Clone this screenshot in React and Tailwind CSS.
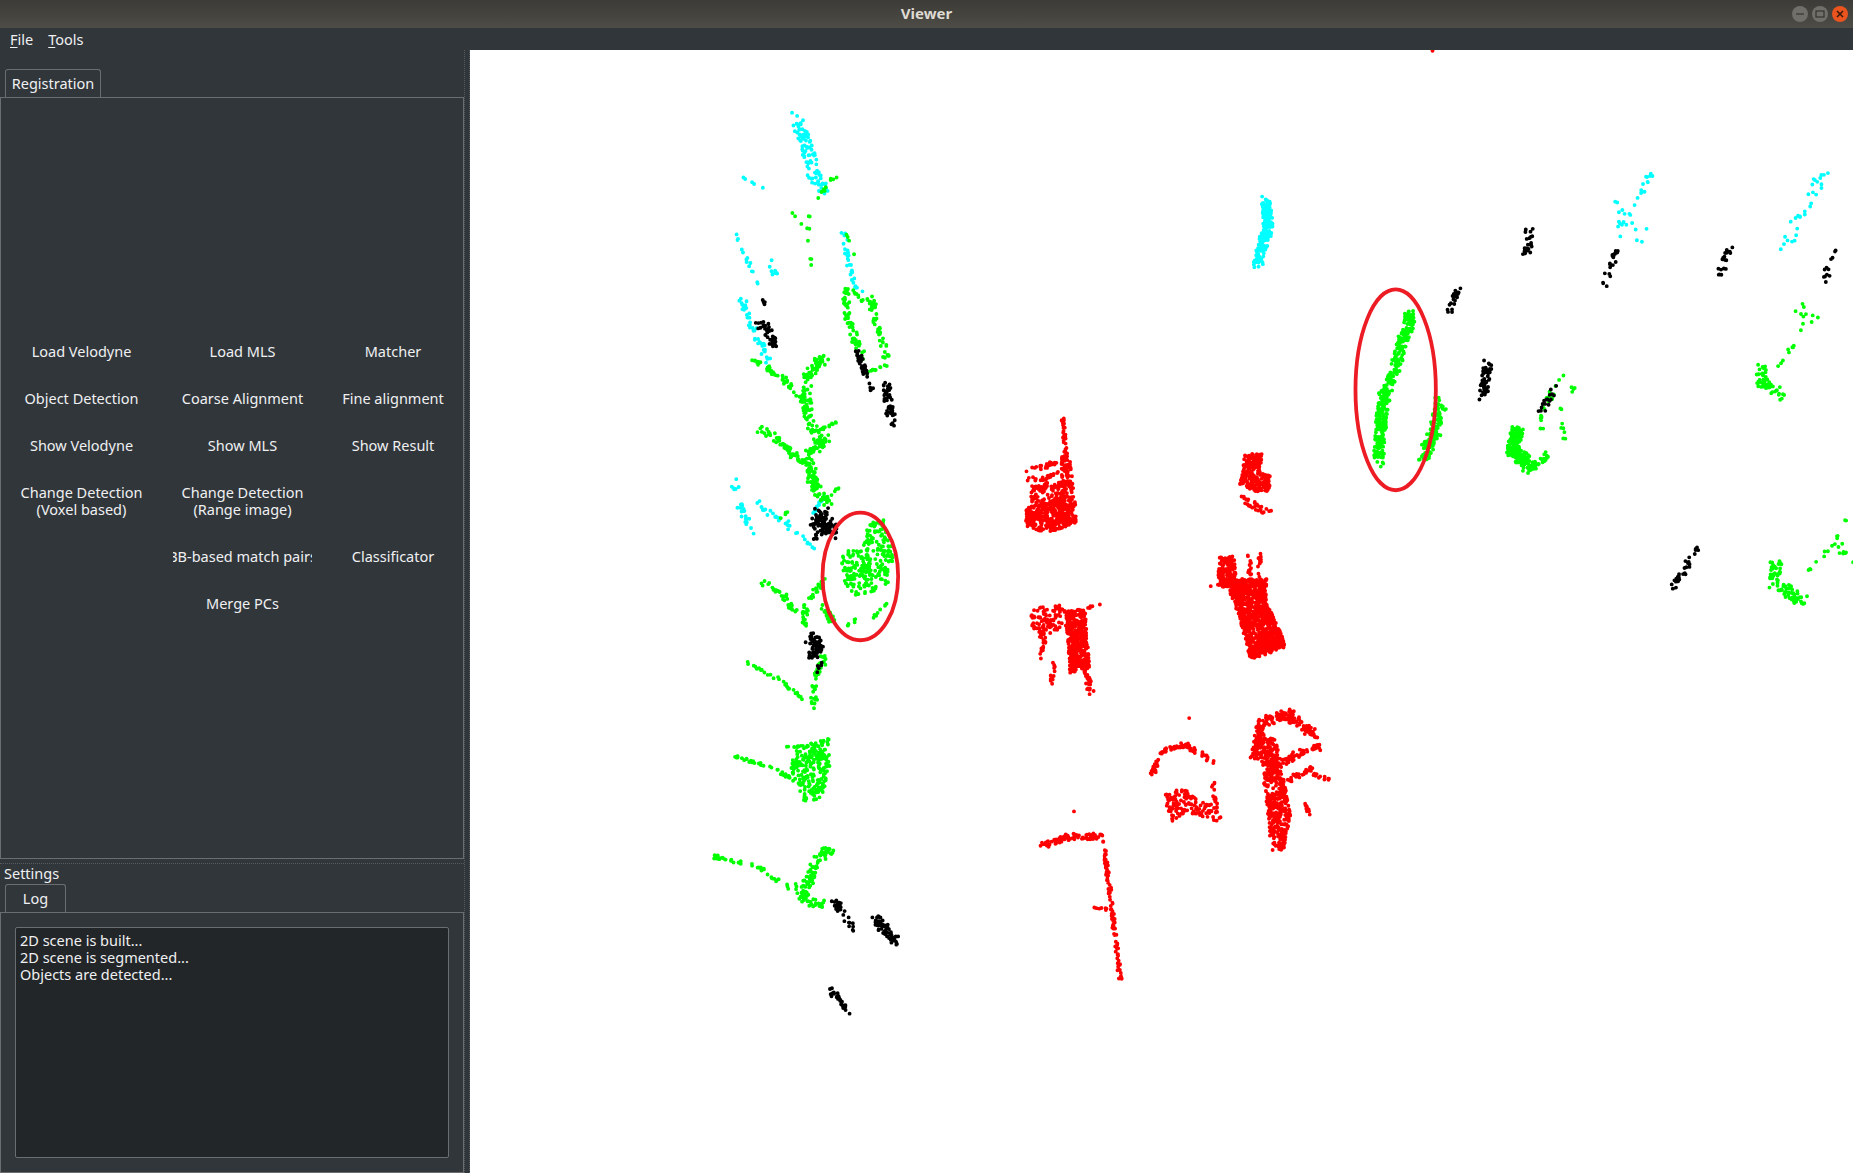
import React from "react";

// tiny seeded generator so the cloud looks the same on every load
const makeRand = (seed) => () => {
  seed = (seed * 16807) % 2147483647;
  return seed / 2147483647;
};

// scatter n points along a polyline, w = spread either side
const along = (pts, w, n, rand) => {
  const segs = [];
  let total = 0;
  for (let i = 0; i + 3 < pts.length; i += 2) {
    const len = Math.hypot(pts[i + 2] - pts[i], pts[i + 3] - pts[i + 1]);
    segs.push([pts[i], pts[i + 1], pts[i + 2], pts[i + 3], len]);
    total += len;
  }
  let d = "";
  for (let k = 0; k < n; k++) {
    let t = rand() * total;
    let s = segs[0];
    for (const seg of segs) {
      s = seg;
      if (t <= seg[4]) break;
      t -= seg[4];
    }
    const f = s[4] ? t / s[4] : 0;
    const x = s[0] + (s[2] - s[0]) * f + (rand() - 0.5) * 2 * w;
    const y = s[1] + (s[3] - s[1]) * f + (rand() - 0.5) * 2 * w;
    d += `M${x.toFixed(1)} ${y.toFixed(1)}h0`;
  }
  return d;
};

const isInside = (x, y, p) => {
  let hit = false;
  for (let i = 0, j = p.length - 2; i < p.length; j = i, i += 2) {
    if (p[i + 1] > y !== p[j + 1] > y && x < ((p[j] - p[i]) * (y - p[i + 1])) / (p[j + 1] - p[i + 1]) + p[i]) hit = !hit;
  }
  return hit;
};

// fill a polygon with n points, for the dense parts of the objects
const inside = (p, n, rand) => {
  const xs = p.filter((_, i) => i % 2 === 0);
  const ys = p.filter((_, i) => i % 2 === 1);
  const x0 = Math.min(...xs), x1 = Math.max(...xs);
  const y0 = Math.min(...ys), y1 = Math.max(...ys);
  let d = "";
  let made = 0;
  while (made < n) {
    const x = x0 + rand() * (x1 - x0);
    const y = y0 + rand() * (y1 - y0);
    if (isInside(x, y, p)) {
      d += `M${x.toFixed(1)} ${y.toFixed(1)}h0`;
      made++;
    }
  }
  return d;
};

const CYAN = [
  [5, 90, [675, 100, 682, 122, 688, 145, 696, 160]],
  [1, 5, [628, 150, 646, 160]],
  [1.5, 14, [623, 198, 632, 220, 641, 240]],
  [3, 8, [650, 222, 660, 234]],
  [3, 40, [627, 253, 640, 285, 650, 306]],
  [2.5, 30, [714, 194, 718, 225, 728, 250]],
  [3, 24, [620, 405, 627, 430, 637, 451]],
  [3, 26, [640, 424, 660, 440, 678, 456]],
  [1.5, 6, [680, 455, 692, 468]],
  [1, 22, [688, 436, 697, 420]],
  [4, 200, [1071, 168, 1073, 190, 1064, 224]],
  [3, 14, [1396, 145, 1392, 160, 1383, 172]],
  [7, 14, [1368, 182, 1394, 200]],
  [2, 5, [1367, 170, 1372, 205]],
  [5, 30, [1544, 143, 1528, 175, 1510, 211]],
];

const GREEN = [
  [1.5, 12, [707, 149, 694, 165, 685, 185]],
  [2, 9, [670, 178, 685, 197, 685, 225]],
  [1, 4, [716, 198, 725, 222]],
  [3, 60, [715, 245, 717, 270, 730, 305]],
  [3, 50, [736, 250, 742, 275, 751, 305]],
  [1, 10, [730, 255, 720, 245]],
  [1, 14, [732, 316, 752, 309]],
  [2.5, 50, [638, 305, 662, 320, 680, 340]],
  [4, 110, [698, 300, 682, 320, 684, 355, 694, 372]],
  [1, 14, [692, 365, 712, 356]],
  [3, 55, [642, 362, 665, 378, 685, 400]],
  [4, 120, [698, 372, 684, 385, 688, 410, 700, 425]],
  [1, 5, [710, 412, 702, 420]],
  [0.8, 4, [660, 438, 667, 433]],
  [2, 30, [640, 490, 662, 503, 675, 520]],
  [2.5, 40, [697, 490, 683, 510, 680, 530]],
  [3, 24, [694, 512, 706, 528]],
  [1.5, 30, [632, 561, 660, 575, 682, 595]],
  [3, 36, [698, 555, 690, 578, 688, 598]],
  [1, 8, [740, 522, 750, 510]],
  [1.5, 8, [724, 525, 716, 530]],
  // lower left
  [1.5, 36, [621, 640, 650, 648, 672, 660]],
  [1, 6, [666, 633, 690, 631]],
  [1.5, 42, [604, 725, 640, 733, 672, 755]],
  [4, 80, [704, 717, 690, 730, 680, 760]],
  [3, 36, [675, 750, 682, 764, 698, 765]],
  // right side
  [4.5, 330, [1194, 264, 1184, 300, 1170, 340, 1166, 392]],
  [5, 120, [1219, 340, 1214, 365, 1204, 388]],
  [2.5, 20, [1322, 318, 1306, 345, 1304, 362]],
  [1.5, 8, [1320, 345, 1324, 378]],
  [1.5, 4, [1332, 326, 1330, 332]],
  [5, 190, [1284, 364, 1280, 382, 1296, 396]],
  [3, 30, [1296, 397, 1310, 385]],
  [1.5, 12, [1528, 262, 1522, 285, 1505, 310]],
  [4, 7, [1518, 258, 1538, 272]],
  [4, 55, [1491, 310, 1490, 324, 1512, 336]],
  [1.5, 14, [1562, 440, 1552, 460, 1530, 485]],
  [3, 8, [1556, 462, 1568, 476]],
  [5, 85, [1503, 474, 1502, 495, 1525, 508]],
];

const GREEN_DENSE = [
  [[712, 472, 722, 462, 735, 470, 740, 500, 724, 505, 714, 492], 120],
  [[728, 445, 748, 440, 756, 470, 752, 495, 738, 500], 130],
  [[672, 632, 702, 625, 702, 650, 695, 678, 680, 678, 668, 652], 230],
];

const BLACK = [
  [1, 4, [646, 254, 648, 258]],
  [4, 40, [642, 272, 652, 282, 655, 293]],
  [2.5, 34, [726, 298, 733, 316]],
  [1.5, 6, [733, 318, 738, 330]],
  [4, 50, [750, 326, 753, 345, 755, 358]],
  [6, 110, [690, 448, 695, 435, 703, 450]],
  [1.5, 6, [688, 458, 696, 450]],
  [4.5, 60, [686, 540, 693, 548, 686, 556]],
  [1.5, 5, [690, 570, 696, 560]],
  [3.5, 30, [706, 762, 716, 778, 722, 788]],
  [4, 60, [740, 776, 750, 790, 758, 798]],
  [2.5, 28, [702, 838, 712, 848, 718, 860]],
  [4, 22, [1294, 196, 1292, 215]],
  [2.5, 20, [1234, 243, 1226, 263]],
  [3, 20, [1368, 210, 1356, 244]],
  [3, 18, [1468, 200, 1454, 234]],
  [3, 12, [1553, 214, 1542, 238]],
  [3.5, 60, [1259, 308, 1255, 336]],
  [3, 18, [1318, 324, 1304, 350]],
  [2.5, 30, [1436, 463, 1416, 498]],
];

const RED = [
  [1.5, 30, [899, 355, 902, 385]],
  [2, 28, [866, 398, 885, 395, 905, 385]],
  [2, 28, [870, 406, 885, 405, 905, 395]],
  [2.5, 40, [873, 414, 905, 408]],
  [1, 16, [1047, 418, 1075, 433]],
  [1, 14, [1052, 425, 1070, 434]],
  [1.5, 16, [1057, 470, 1058, 490]],
  [1.5, 14, [1066, 470, 1065, 488]],
  [1.5, 12, [888, 518, 932, 513]],
  [1.5, 12, [884, 540, 880, 562]],
  [1.5, 12, [893, 560, 889, 578]],
  [2.5, 30, [918, 565, 923, 586]],
  [2, 70, [975, 655, 982, 637, 1002, 630, 1028, 645]],
  [2, 16, [1026, 660, 1031, 692]],
  [4, 190, [1062, 640, 1068, 612, 1090, 604, 1112, 622]],
  [2.5, 70, [1078, 650, 1100, 637, 1118, 632]],
  [2, 30, [1082, 665, 1110, 650]],
  [1.5, 14, [1110, 655, 1125, 660]],
  [1.5, 12, [1105, 680, 1112, 700]],
  [2.5, 80, [882, 716, 905, 708, 933, 708]],
  [1.5, 100, [933, 708, 940, 760, 948, 830]],
  [1, 8, [925, 768, 940, 770]],
  [0.5, 1, [1212, 43, 1212, 43]],
  [0.5, 1, [909, 687, 909, 687]],
  [0.5, 1, [1006, 608, 1006, 608]],
  [0.5, 1, [1025, 496, 1025, 496]],
];

// dense parts of the red objects
const RED_DENSE = [
  [[898, 385, 905, 385, 912, 442, 898, 445], 150],
  [[868, 430, 900, 420, 912, 442, 885, 452, 868, 445], 320],
  [[872, 416, 900, 410, 900, 425, 872, 430], 50],
  [[1052, 385, 1068, 383, 1066, 400, 1075, 403, 1074, 416, 1062, 416, 1048, 410, 1052, 398], 260],
  [[1032, 472, 1044, 470, 1046, 490, 1072, 490, 1072, 510, 1088, 545, 1085, 550, 1058, 558, 1048, 520, 1040, 500, 1030, 495], 1100],
  [[872, 515, 900, 512, 905, 530, 880, 540, 872, 530], 100],
  [[902, 518, 918, 515, 922, 565, 905, 570], 400],
  [[985, 672, 1003, 666, 1014, 678, 1030, 682, 1030, 695, 1005, 688, 990, 696], 130],
  [[1065, 625, 1080, 625, 1092, 690, 1086, 720, 1076, 720], 450],
];

const cloudPath = (list, dense, seed) => {
  const rand = makeRand(seed);
  const lines = list.map(([w, n, pts]) => along(pts, w, n, rand)).join("");
  const solid = dense.map(([p, n]) => inside(p, n, rand)).join("");
  return lines + solid;
};

const PointCloud = () => (
  <svg className="block w-full h-full" viewBox="397.7 42.3 1170.3 950.7" preserveAspectRatio="none">
    <g fill="none" strokeLinecap="round" strokeWidth="3.3">
      <path d={cloudPath(CYAN, [], 11)} stroke="#00ffff" />
      <path d={cloudPath(GREEN, GREEN_DENSE, 29)} stroke="#00ff00" />
      <path d={cloudPath(BLACK, [], 47)} stroke="#000000" />
      <path d={cloudPath(RED, RED_DENSE, 83)} stroke="#ff0000" />
    </g>
    <g fill="none" stroke="#ed1c24" strokeWidth="3.2">
      <ellipse cx="728" cy="488" rx="32" ry="54" />
      <ellipse cx="1181" cy="330" rx="34" ry="85" />
    </g>
  </svg>
);

const WindowButton = ({ className, children }) => (
  <div className={`w-4 h-4 rounded-full flex items-center justify-center ${className}`}>
    <svg width="10" height="10" viewBox="0 0 10 10" fill="none" stroke="currentColor" strokeWidth="1.2">
      {children}
    </svg>
  </div>
);

const buttons = [
  ["Load Velodyne", "Load MLS", "Matcher"],
  ["Object Detection", "Coarse Alignment", "Fine alignment"],
  ["Show Velodyne", "Show MLS", "Show Result"],
  [["Change Detection", "(Voxel based)"], ["Change Detection", "(Range image)"], null],
  [null, "BB-based match pairs", "Classificator"],
  [null, "Merge PCs", null],
];

const Mnemonic = ({ first, rest }) => (
  <span>
    <span className="underline underline-offset-2">{first}</span>
    {rest}
  </span>
);

const ToolButton = ({ label }) => {
  if (!label) return <div />;
  const lines = Array.isArray(label) ? label : [label];
  return (
    <div className="w-full flex flex-col items-center justify-center overflow-hidden whitespace-nowrap leading-[17px]">
      {lines.map((l) => <span key={l}>{l}</span>)}
    </div>
  );
};

const Tab = ({ label, className }) => (
  <div className={`h-7 shrink-0 flex items-center justify-center border border-b-0 border-[#6a6e70] rounded-t-[3px] ${className}`}>
    {label}
  </div>
);

export default function App() {
  return (
    <div className="flex flex-col h-screen overflow-hidden bg-[#31363b] text-[#eff0f1] text-[14.5px] font-['Noto_Sans',sans-serif]">
      {/* title bar */}
      <header className="relative h-7 shrink-0 flex items-center justify-center pb-[2px] bg-gradient-to-b from-[#3c3b37] to-[#4e4c46]">
        <span className="font-bold text-[15px] text-[#dfdbd2]">Viewer</span>
        <div className="absolute right-[5px] top-[6px] flex gap-1">
          <WindowButton className="bg-[#706f6a] text-[#35342f]">
            <path d="M1 5h8" />
          </WindowButton>
          <WindowButton className="bg-[#706f6a] text-[#35342f]">
            <rect x="1" y="2" width="8" height="6" />
          </WindowButton>
          <WindowButton className="bg-[#e9541f] text-[#3a1a0a]">
            <path d="M2 2l6 6M8 2l-6 6" strokeWidth="1.6" />
          </WindowButton>
        </div>
      </header>

      {/* menu bar */}
      <nav className="h-[22px] shrink-0 flex items-center gap-[15px] pl-[10px] pt-px">
        <Mnemonic first="F" rest="ile" />
        <Mnemonic first="T" rest="ools" />
      </nav>

      <div className="flex-1 flex min-h-0">
        <aside className="w-[470px] shrink-0 flex">
          <div className="w-[464px] shrink-0 flex flex-col min-h-0">
            {/* registration dock */}
            <div className="pt-[19px] h-[809px] shrink-0 flex flex-col">
              <Tab label="Registration" className="w-[96px] ml-[5px]" />
              <div className="flex-1 border border-[#6a6e70] flex flex-col justify-center">
                <div className="-mt-[2px] grid grid-cols-[161px_139px_140px] grid-rows-[35px_35px_35px_52px_35px_35px] gap-x-[11px] gap-y-3">
                  {buttons.map((row, i) =>
                    row.map((label, j) => (
                      <div key={`${i}-${j}`} className="flex justify-center min-w-0">
                        <ToolButton label={label} />
                      </div>
                    ))
                  )}
                </div>
              </div>
            </div>

            {/* settings dock */}
            <div className="flex-1 flex flex-col border-t border-dotted border-[#565b5f] min-h-0 mt-[4px]">
              <div className="h-[20px] shrink-0 pl-1 flex items-center">Settings</div>
              <Tab label="Log" className="w-[61px] ml-[5px]" />
              <div className="flex-1 border border-[#6a6e70] p-[14px] min-h-0">
                <div className="h-full bg-[#232629] border border-[#6a6e70] rounded-[2px] p-[4px] leading-[17px]">
                  <p>2D scene is built...</p>
                  <p>2D scene is segmented...</p>
                  <p>Objects are detected...</p>
                </div>
              </div>
            </div>
          </div>
          {/* splitter */}
          <div className="flex-1 border-x border-dotted border-[#565b5f]" />
        </aside>

        {/* viewer */}
        <main className="flex-1 bg-white min-w-0">
          <PointCloud />
        </main>
      </div>
    </div>
  );
}
